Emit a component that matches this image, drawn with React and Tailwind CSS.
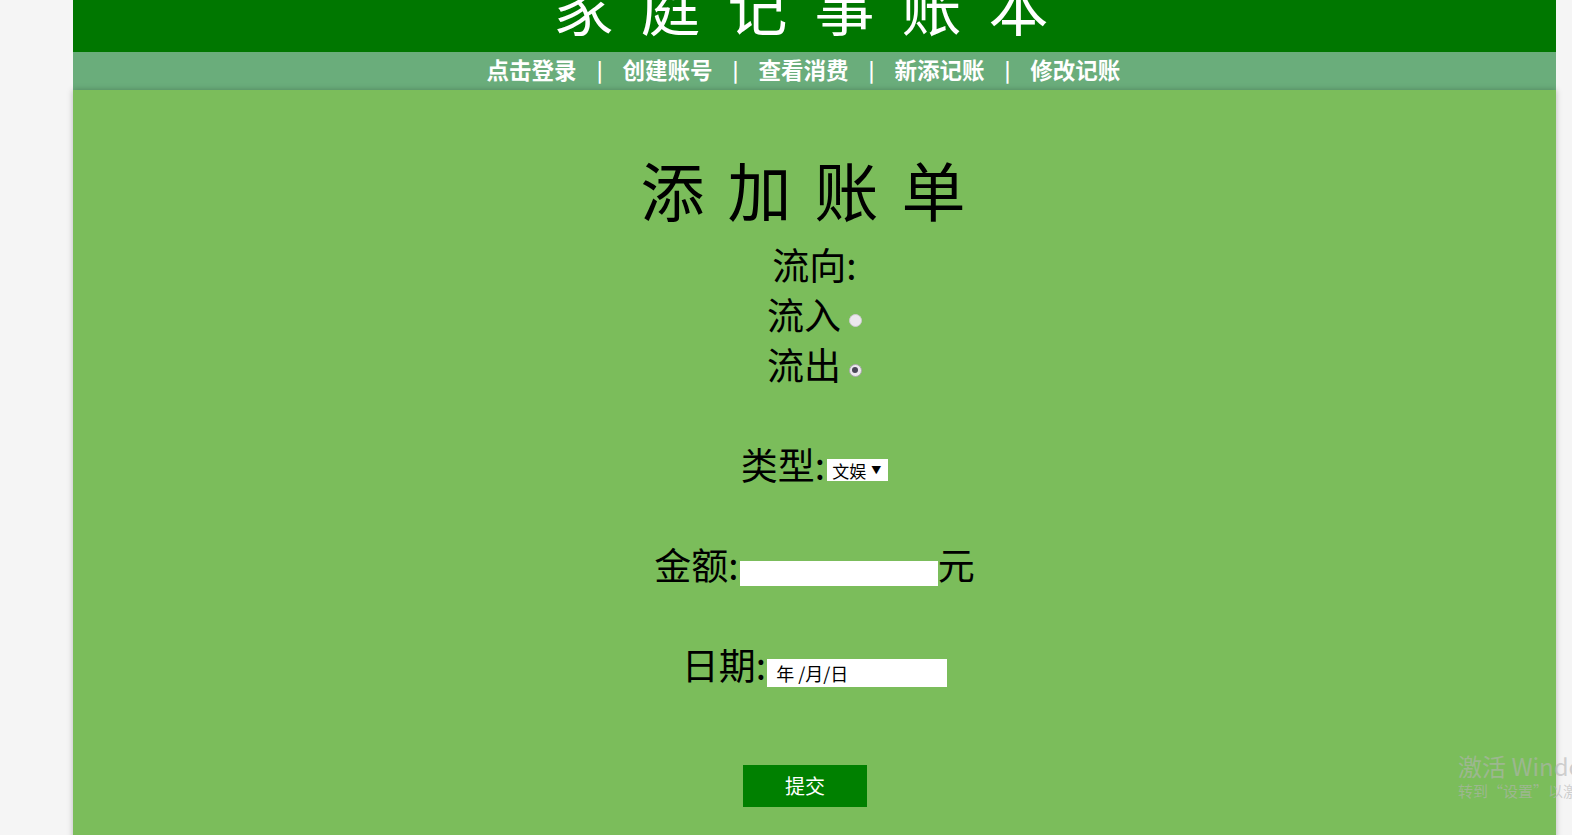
export default function App() {
  const font = { fontFamily: '"Noto Sans CJK SC", "Noto Sans", sans-serif' };
  return (
    <div className="relative w-[1572px] h-[835px] overflow-hidden bg-[#f5f5f5]" style={font}>
      <div className="ml-[73px] w-[1483px]">
        <header className="h-[52px] overflow-hidden bg-[#007700] text-white">
          <h1 className="mt-[-25px] text-center text-[60px] leading-[60px] tracking-[27px] font-normal">家庭记事账本</h1>
        </header>
        <nav className="h-[38px] bg-[#6aad7b] flex items-center justify-center gap-[20px] text-white font-bold text-[22.5px] leading-none pr-[22px] pb-[3px]">
          <a>点击登录</a>
          <span className="text-[20px]">|</span>
          <a>创建账号</a>
          <span className="text-[20px]">|</span>
          <a>查看消费</a>
          <span className="text-[20px]">|</span>
          <a>新添记账</a>
          <span className="text-[20px]">|</span>
          <a>修改记账</a>
        </nav>
        <main className="h-[760px] bg-[#7bbd5b] shadow-[0_0_6px_rgba(0,0,0,0.25)] pt-[58px] flex flex-col items-center text-black">
          <h2 className="text-[64px] leading-[80px] tracking-[23px] font-normal">添加账单</h2>
          <form className="mt-[11px] flex flex-col items-center text-[37px] leading-[50px]">
            <div className="h-[50px] flex items-center">流向:</div>
            <label className="h-[50px] flex items-center">
              流入
              <span className="ml-[8px] mt-[12px] w-[13px] h-[13px] rounded-full bg-[#ece8ee] border border-[#cfcbd2]" />
            </label>
            <label className="h-[50px] flex items-center">
              流出
              <span className="ml-[8px] mt-[12px] w-[13px] h-[13px] rounded-full bg-[#ece8ee] border border-[#aaa6ad] flex items-center justify-center">
                <span className="w-[6px] h-[6px] rounded-full bg-[#4a4758]" />
              </span>
            </label>
            <div className="h-[50px]" />
            <div className="h-[50px] flex items-center">
              类型:
              <div className="ml-[2px] mt-[12px] w-[61px] h-[22px] bg-white flex items-center justify-between pl-[5px] pr-[7px] text-[17px] leading-none">
                <span>文娱</span>
                <span className="text-[10px]">▼</span>
              </div>
            </div>
            <div className="h-[50px]" />
            <div className="h-[50px] flex items-center">
              金额:
              <input type="text" className="ml-[1px] mt-[19px] w-[198px] h-[25px] bg-white outline-none" />
              元
            </div>
            <div className="h-[50px]" />
            <div className="h-[50px] flex items-center">
              日期:
              <div className="ml-[1px] mt-[18px] w-[180px] h-[28px] bg-white flex items-center pl-[9px] text-[18px] leading-none">
                年 /月/日
              </div>
            </div>
            <button type="button" className="mt-[76px] mr-[19px] w-[124px] h-[42px] bg-[#008000] text-white text-[20px] leading-none">
              提交
            </button>
          </form>
        </main>
      </div>
      <div className="absolute left-[1458px] top-[751px] whitespace-nowrap text-[rgba(180,180,180,0.6)]">
        <div className="text-[24px] leading-[30px]">激活 Windows</div>
        <div className="text-[15px] leading-[20px]">转到“设置”以激活 Windows。</div>
      </div>
    </div>
  );
}
